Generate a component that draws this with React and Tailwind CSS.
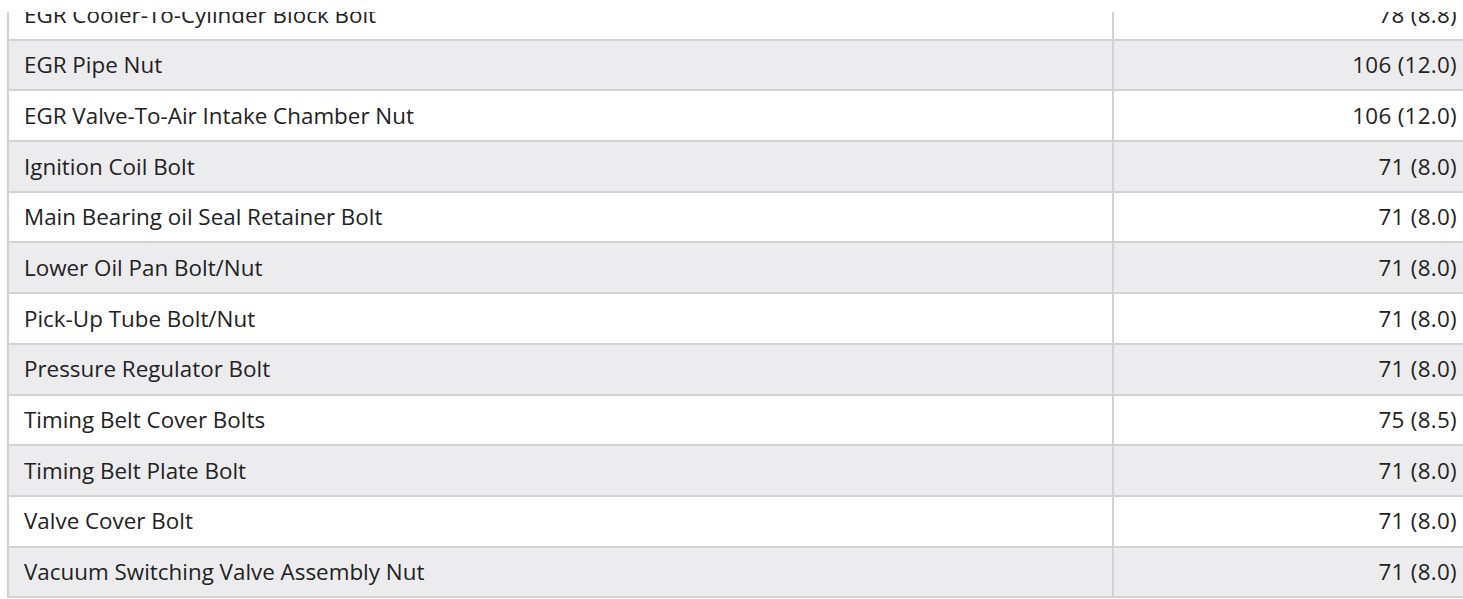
const rows = [
  ['EGR Cooler-To-Cylinder Block Bolt', '78 (8.8)'],
  ['EGR Pipe Nut', '106 (12.0)'],
  ['EGR Valve-To-Air Intake Chamber Nut', '106 (12.0)'],
  ['Ignition Coil Bolt', '71 (8.0)'],
  ['Main Bearing oil Seal Retainer Bolt', '71 (8.0)'],
  ['Lower Oil Pan Bolt/Nut', '71 (8.0)'],
  ['Pick-Up Tube Bolt/Nut', '71 (8.0)'],
  ['Pressure Regulator Bolt', '71 (8.0)'],
  ['Timing Belt Cover Bolts', '75 (8.5)'],
  ['Timing Belt Plate Bolt', '71 (8.0)'],
  ['Valve Cover Bolt', '71 (8.0)'],
  ['Vacuum Switching Valve Assembly Nut', '71 (8.0)'],
];

export default function App() {
  return (
    <div className="relative h-[599px] overflow-hidden bg-white">
      {/* sticky header edge covering the top of the scrolled table */}
      <div className="absolute inset-x-0 top-0 h-[12px] bg-white" />
      <div
        className="ml-[7px] mt-[-10px] w-[1458px] border-x-2 border-[#d2d2d2] text-[22.4px] text-[#222]"
        style={{ fontFamily: '"Open Sans", "Liberation Sans", sans-serif' }}
      >
        {rows.map(([name, value], i) => (
          <div
            key={name}
            className={`grid grid-cols-[1103px_1fr] h-[50.7px] border-b-2 border-[#d2d2d2] ${
              i % 2 === 1 ? 'bg-[#ececee]' : 'bg-white'
            }`}
          >
            <div className="flex items-center pl-[15px]">{name}</div>
            <div className="flex items-center justify-end border-l-2 border-[#d2d2d2] pr-[6px] tracking-[0.3px]">{value}</div>
          </div>
        ))}
      </div>
    </div>
  );
}
